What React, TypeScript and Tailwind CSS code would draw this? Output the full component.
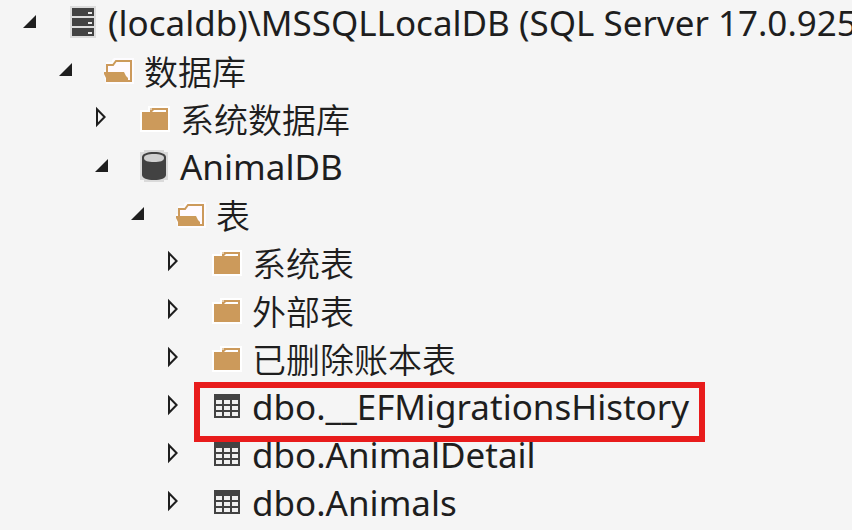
import { useState } from "react";

type IconKind = "server" | "folder" | "database" | "table";

type TreeItem = {
  label: string;
  icon: IconKind;
  cjk?: boolean;
  marked?: boolean;
  open?: boolean;
  children?: TreeItem[];
};

const tree: TreeItem = {
  label: "(localdb)\\MSSQLLocalDB (SQL Server 17.0.925",
  icon: "server",
  open: true,
  children: [
    {
      label: "数据库",
      icon: "folder",
      cjk: true,
      open: true,
      children: [
        { label: "系统数据库", icon: "folder", cjk: true },
        {
          label: "AnimalDB",
          icon: "database",
          open: true,
          children: [
            {
              label: "表",
              icon: "folder",
              cjk: true,
              open: true,
              children: [
                { label: "系统表", icon: "folder", cjk: true },
                { label: "外部表", icon: "folder", cjk: true },
                { label: "已删除账本表", icon: "folder", cjk: true },
                { label: "dbo.__EFMigrationsHistory", icon: "table", marked: true },
                { label: "dbo.AnimalDetail", icon: "table" },
                { label: "dbo.Animals", icon: "table" },
              ],
            },
          ],
        },
      ],
    },
  ],
};

function Arrow({ open }: { open: boolean }) {
  return (
    <svg className="block h-6 w-5" viewBox="0 0 20 24" aria-hidden="true">
      {open ? (
        <path d="M16 5v13H3z" fill="#1e1e1e" />
      ) : (
        <path d="M5 3.2v15.6L12.6 11z" fill="none" stroke="#1e1e1e" strokeWidth="2" />
      )}
    </svg>
  );
}

function ServerIcon() {
  return (
    <>
      <path d="M2 0h26v32H2z" fill="#dcdcdc" />
      {[2, 12, 22].map((y) => (
        <g key={y}>
          <rect x="4" y={y} width="22" height="8" fill="#424242" />
          <rect x="20" y={y + 4} width="4" height="2" fill="#e8e8e8" />
        </g>
      ))}
    </>
  );
}

function FolderIcon({ open }: { open: boolean }) {
  if (open) {
    return (
      <>
        <path d="M2 8h6V6l2-2h20v26H2l-2-8v-6h2z" fill="#fdfcff" />
        <path d="M3 19v-8h6l3-4h15v20h-4" fill="#fffaff" stroke="#cc9a5b" strokeWidth="2" />
        <path d="M0 18h20l2 4 2 2v4H2v-4l-2-4z" fill="#cc9a5b" />
      </>
    );
  }
  return (
    <>
      <path d="M0 8h8V4h22v26H0z" fill="#fff" />
      <path d="M2 10h8V6h18v22H2z" fill="#cc9a5b" />
      <path d="M14 8h12v2H12z" fill="#fff" />
      <path d="M10 6h2v2h-2z" fill="#e5cdad" />
    </>
  );
}

function DatabaseIcon() {
  return (
    <>
      <path d="M0 2h4V0h20v2h4v28h-4v2H4v-2H0z" fill="#dadada" />
      <path d="M2 7c0-3 5-5 12-5s12 2 12 5v18c0 3-5 5-12 5S2 28 2 25z" fill="#424242" />
      <path d="M4 8C4 5 8 4 14 4s10 1 10 4-4 4-10 4S4 11 4 8z" fill="#d0d0d0" />
    </>
  );
}

function TableIcon() {
  return (
    <>
      <path d="M2 4h26v24H2z" fill="#424242" />
      {[10, 16, 22].map((y) =>
        [4, 12, 20].map((x) => (
          <rect key={`${x}-${y}`} x={x} y={y} width="6" height="4" fill="#f0f0f0" />
        )),
      )}
    </>
  );
}

function ItemIcon({ kind, open }: { kind: IconKind; open: boolean }) {
  return (
    <svg className="size-8 shrink-0" viewBox="0 0 32 32" aria-hidden="true">
      {kind === "server" ? <ServerIcon /> : null}
      {kind === "folder" ? <FolderIcon open={open} /> : null}
      {kind === "database" ? <DatabaseIcon /> : null}
      {kind === "table" ? <TableIcon /> : null}
    </svg>
  );
}

function TreeNode({ item }: { item: TreeItem }) {
  const [open, setOpen] = useState(Boolean(item.open));

  return (
    <li role="treeitem" aria-expanded={open}>
      <div className="flex h-12 items-center gap-7">
        <button
          type="button"
          className="shrink-0"
          aria-label={`Toggle ${item.label}`}
          onClick={() => setOpen(!open)}
        >
          <Arrow open={open} />
        </button>
        <div className="relative flex h-12 items-center gap-2">
          <ItemIcon kind={item.icon} open={open} />
          <span
            className={
              item.cjk
                ? "pt-0.5 font-['Noto_Sans_CJK_SC',sans-serif] text-[34px] leading-12 font-[350]"
                : "pt-0.5 font-['Noto_Sans','Noto_Sans_CJK_SC',sans-serif] text-[35px] leading-12"
            }
          >
            {item.label}
          </span>
          {item.marked ? (
            <div className="pointer-events-none absolute top-0 -right-4 -bottom-3 -left-4.5 z-10 border-6 border-[#e81c1c]" />
          ) : null}
        </div>
      </div>
      {open && item.children ? (
        <ul role="group" className="pl-9">
          {item.children.map((child) => (
            <TreeNode key={child.label} item={child} />
          ))}
        </ul>
      ) : null}
    </li>
  );
}

export default function App() {
  return (
    <main className="min-h-screen overflow-hidden bg-[#f5f5f5]">
      <ul
        role="tree"
        aria-label="SQL Server"
        className="-mt-0.5 pl-5 whitespace-nowrap text-[#1e1e1e]"
      >
        <TreeNode item={tree} />
      </ul>
    </main>
  );
}
